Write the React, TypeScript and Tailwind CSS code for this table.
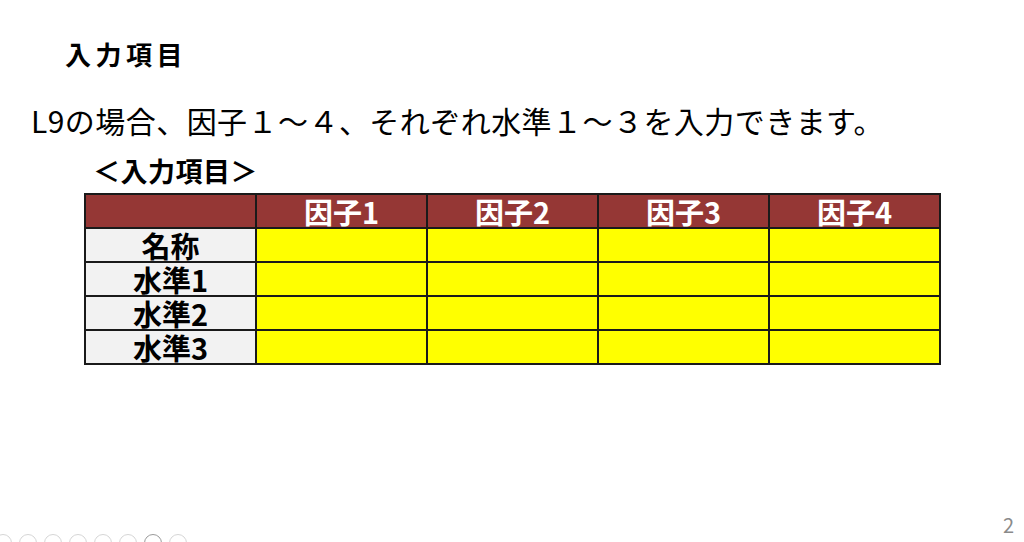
import React from "react";

const font = { fontFamily: '"Noto Sans CJK JP", "Noto Sans", sans-serif' };

const factors = ["因子1", "因子2", "因子3", "因子4"];
const rows = ["名称", "水準1", "水準2", "水準3"];

function SlideControls() {
  // faint slideshow toolbar, mostly cut off at the bottom edge
  return (
    <div className="absolute left-[-6px] top-[534px] flex gap-[7px]">
      {Array.from({ length: 8 }).map((_, i) => (
        <div
          key={i}
          className={
            "w-[18px] h-[18px] rounded-full border " +
            (i === 6 ? "border-[#9a9a9a]" : "border-[#d6d6d6]")
          }
        />
      ))}
    </div>
  );
}

export default function App() {
  return (
    <div
      className="relative w-[1024px] h-[542px] overflow-hidden bg-white text-black"
      style={font}
    >
      <div className="flex flex-col">
        <h1 className="ml-[65px] mt-[37px] text-[26px] leading-[34px] font-bold tracking-[4.5px]">
          入力項目
        </h1>
        <p className="ml-[31px] mt-[29px] text-[30px] leading-[40px] tracking-[0.45px]">
          L9の場合、因子１～４、それぞれ水準１～３を入力できます。
        </p>
        <h2 className="ml-[93px] mt-[14px] text-[27px] leading-[34px] font-bold tracking-[0.5px]">
          ＜入力項目＞
        </h2>
        <table className="ml-[84px] mt-[5px] w-[857px] border-collapse table-fixed">
          <thead>
            <tr className="h-[34px] bg-[#953735]">
              <th className="border-2 border-[#1a1a1a]" />
              {factors.map((f) => (
                <th
                  key={f}
                  className="border-2 border-[#1a1a1a] text-white text-[29px] leading-[28px] font-bold p-0"
                >
                  {f}
                </th>
              ))}
            </tr>
          </thead>
          <tbody>
            {rows.map((r) => (
              <tr key={r} className="h-[34px]">
                <td className="border-2 border-[#1a1a1a] bg-[#f2f2f2] text-center text-[29px] leading-[28px] font-bold p-0">
                  {r}
                </td>
                {factors.map((f) => (
                  <td key={f} className="border-2 border-[#1a1a1a] bg-[#ffff00] p-0" />
                ))}
              </tr>
            ))}
          </tbody>
        </table>
      </div>
      <SlideControls />
      <div className="absolute right-[10px] top-[512px] text-[20px] leading-[26px] text-[#8a8a8a]">
        2
      </div>
    </div>
  );
}
